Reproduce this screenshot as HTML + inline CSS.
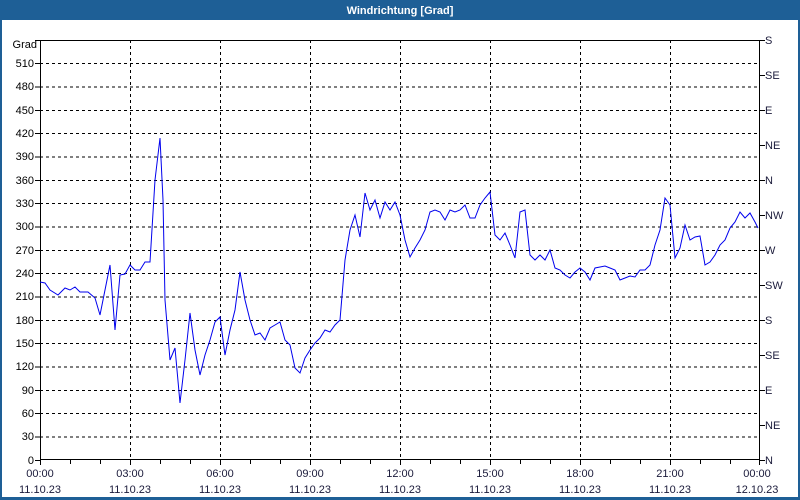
<!DOCTYPE html>
<html><head><meta charset="utf-8"><style>
html,body{margin:0;padding:0;width:800px;height:500px;overflow:hidden;background:#fff;font-family:"Liberation Sans",sans-serif}
</style></head><body>
<svg width="800" height="500" xmlns="http://www.w3.org/2000/svg" style="display:block" font-family="Liberation Sans, sans-serif">
<rect x="0" y="0" width="800" height="500" fill="#1e5f96"/>
<rect x="2" y="20" width="796" height="477" fill="#fff"/>
<text x="400" y="14" fill="#fff" font-size="11" font-weight="bold" text-anchor="middle">Windrichtung [Grad]</text>
<g stroke="#000" stroke-width="1" stroke-dasharray="3,3" shape-rendering="crispEdges">
<path d="M130.5 40V460M220.5 40V460M310.5 40V460M400.5 40V460M490.5 40V460M580.5 40V460M670.5 40V460"/>
<path d="M40 63.5H760M40 87H760M40 110.5H760M40 133.5H760M40 157H760M40 180.5H760M40 203.5H760M40 227H760M40 250.5H760M40 273.5H760M40 297H760M40 320.5H760M40 343.5H760M40 367H760M40 390.5H760M40 413.5H760M40 437H760"/>
</g>
<g stroke="#000" stroke-width="1" fill="none" shape-rendering="crispEdges">
<rect x="40.5" y="40.5" width="719" height="419"/>
<path d="M35 40.5H40M35 63.5H40M35 87H40M35 110.5H40M35 133.5H40M35 157H40M35 180.5H40M35 203.5H40M35 227H40M35 250.5H40M35 273.5H40M35 297H40M35 320.5H40M35 343.5H40M35 367H40M35 390.5H40M35 413.5H40M35 437H40M35 460.5H40"/>
<path d="M760 40.5H765M760 75.5H765M760 110.5H765M760 145.5H765M760 180.5H765M760 215.5H765M760 250.5H765M760 285.5H765M760 320.5H765M760 355.5H765M760 390.5H765M760 425.5H765M760 460.5H765"/>
<path d="M40.5 460V465M70.5 460V464M100.5 460V464M130.5 460V465M160.5 460V464M190.5 460V464M220.5 460V465M250.5 460V464M280.5 460V464M310.5 460V465M340.5 460V464M370.5 460V464M400.5 460V465M430.5 460V464M460.5 460V464M490.5 460V465M520.5 460V464M550.5 460V464M580.5 460V465M610.5 460V464M640.5 460V464M670.5 460V465M700.5 460V464M730.5 460V464M759.5 460V465"/>
</g>
<g font-size="11" fill="#000" text-anchor="end">
<text x="37" y="48">Grad</text>
<text x="34" y="67">510</text><text x="34" y="90">480</text><text x="34" y="114">450</text><text x="34" y="137">420</text><text x="34" y="160">390</text><text x="34" y="184">360</text><text x="34" y="207">330</text><text x="34" y="230">300</text><text x="34" y="254">270</text><text x="34" y="277">240</text><text x="34" y="300">210</text><text x="34" y="324">180</text><text x="34" y="347">150</text><text x="34" y="370">120</text><text x="34" y="394">90</text><text x="34" y="417">60</text><text x="34" y="440">30</text><text x="34" y="464">0</text>
</g>
<g font-size="11" fill="#1a1a3a">
<text x="765" y="44">S</text><text x="765" y="79">SE</text><text x="765" y="114">E</text><text x="765" y="149">NE</text><text x="765" y="184">N</text><text x="765" y="219">NW</text><text x="765" y="254">W</text><text x="765" y="289">SW</text><text x="765" y="324">S</text><text x="765" y="359">SE</text><text x="765" y="394">E</text><text x="765" y="429">NE</text><text x="765" y="464">N</text>
</g>
<g font-size="11" fill="#1a1a3a" text-anchor="middle">
<text x="40" y="477">00:00</text><text x="130" y="477">03:00</text><text x="220" y="477">06:00</text><text x="310" y="477">09:00</text><text x="400" y="477">12:00</text><text x="490" y="477">15:00</text><text x="580" y="477">18:00</text><text x="670" y="477">21:00</text><text x="757" y="477">00:00</text>
<text x="40" y="493">11.10.23</text><text x="130" y="493">11.10.23</text><text x="220" y="493">11.10.23</text><text x="310" y="493">11.10.23</text><text x="400" y="493">11.10.23</text><text x="490" y="493">11.10.23</text><text x="580" y="493">11.10.23</text><text x="670" y="493">11.10.23</text><text x="757" y="493">12.10.23</text>
</g>
<polyline fill="none" stroke="#0000ee" stroke-width="1" points="40,282 45,283 50,290 58,295 65,288 70,290 75,287 80,292 88,292 95,298 100,315 105,290 110,265 115,330 120,275 125,274 130,265 135,270 140,270 145,262 150,262 155,180 160,138 163,200 165,300 170,360 175,348 180,403 185,360 190,313 195,350 200,375 205,355 210,340 215,322 220,317 225,355 230,330 235,310 240,272 245,300 250,320 255,335 260,333 265,340 270,328 275,325 280,322 285,340 290,345 295,368 300,373 305,358 310,350 315,343 320,338 325,330 330,332 335,325 340,320 345,260 350,230 355,215 360,237 365,193 370,210 375,200 380,218 385,202 390,210 395,202 400,215 405,240 410,257 415,248 420,240 425,230 430,212 435,210 440,212 445,220 450,210 455,212 460,210 465,205 470,218 475,218 480,205 485,198 490,192 495,235 500,240 505,233 510,245 515,258 520,212 525,210 530,255 535,260 540,255 545,260 550,250 555,268 560,270 565,275 570,278 575,272 580,268 585,272 590,280 595,268 600,267 605,266 610,268 615,270 620,280 625,278 630,276 635,277 640,270 645,270 650,265 655,245 660,230 665,198 670,205 675,258 680,248 685,225 690,240 695,237 700,236 705,265 710,262 715,255 720,245 725,240 730,228 735,222 740,212 745,218 750,213 755,222 758,228"/>
</svg>
</body></html>
